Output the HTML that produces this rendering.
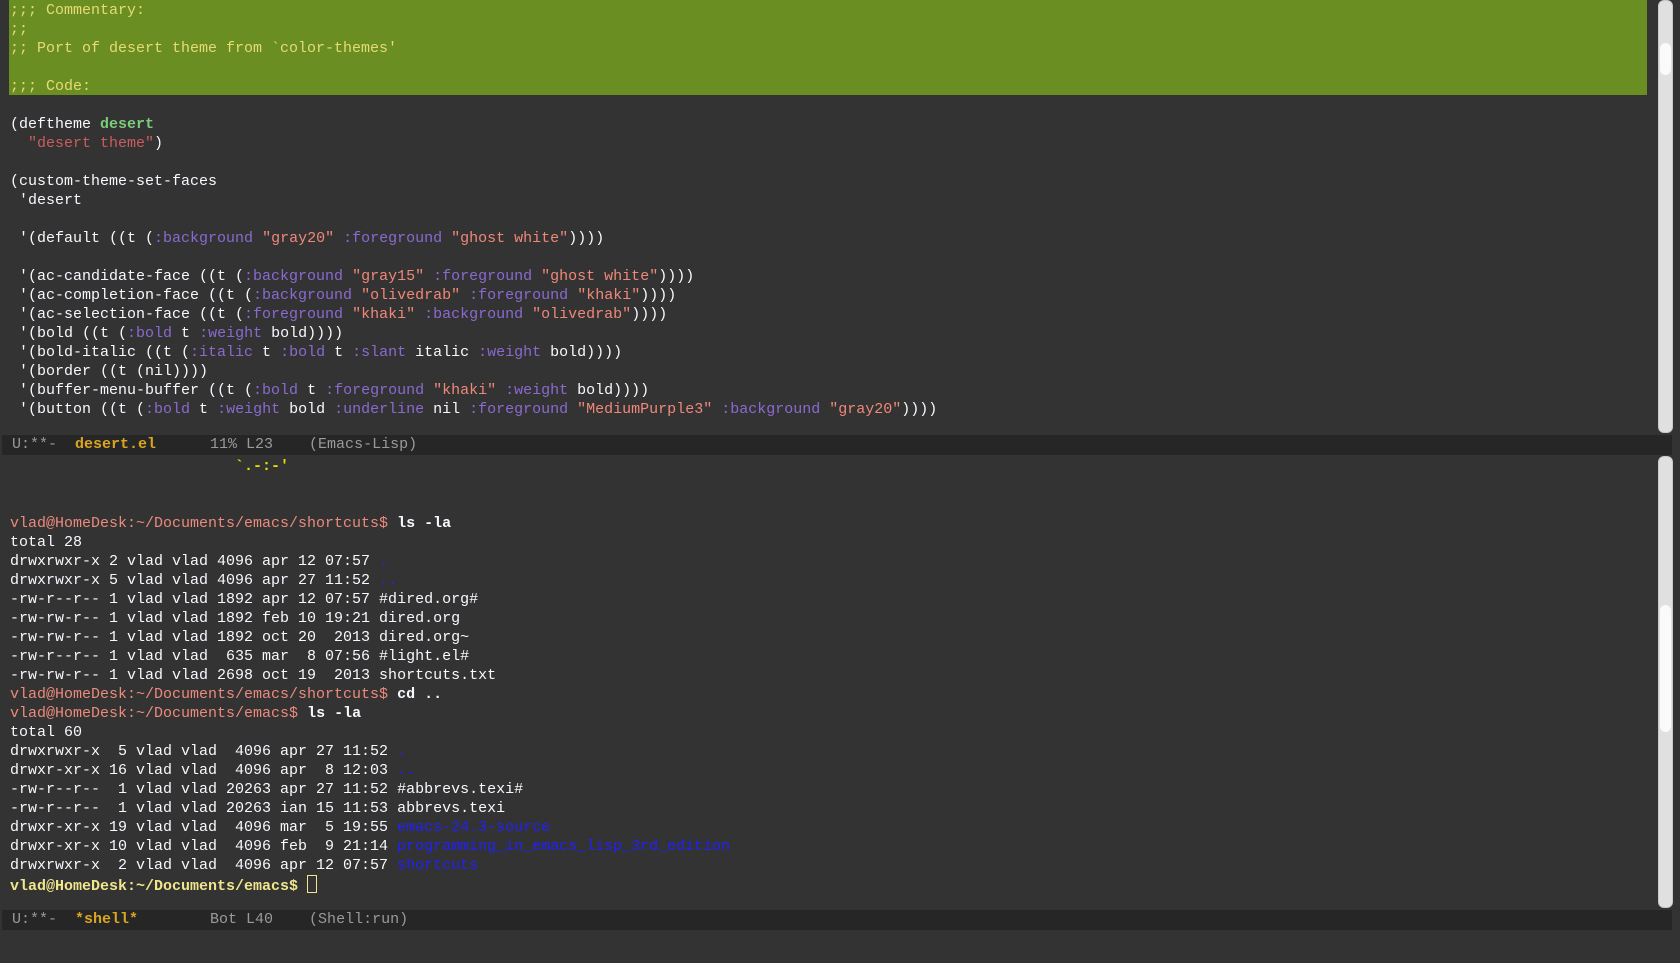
<!DOCTYPE html>
<html><head><meta charset="utf-8"><style>
html,body{margin:0;padding:0;width:1680px;height:963px;background:#333;overflow:hidden}
.w{position:absolute;left:10px;font:15px/19px "Liberation Mono","DejaVu Sans Mono",monospace;color:#f8f8ff;white-space:pre}
.g{position:absolute;left:9px;top:0;width:1638px;height:95px;background:#6b8e23}
.c{color:#e6db74}
.k{color:#8a6ad0}
.s{color:#f08878}
.s2{color:#cd5c5c}
.f{color:#7ccc7c;font-weight:bold}
.b{font-weight:bold}
.p{color:#ec8a7c}
.bl{color:#2020ff}
.ml{position:absolute;left:2px;width:1670px;height:20px;background:#262626;font:15px/20px "Liberation Mono","DejaVu Sans Mono",monospace;color:#9a9a9a;white-space:pre;padding-left:10px;box-sizing:border-box}
.bn{color:#daa520;font-weight:bold}
.sb{position:absolute;left:1658px;width:15px;background:#e0e0e0;border:1px solid #c8c8c8;box-sizing:border-box;border-radius:6px}
.th{position:absolute;left:1px;width:11px;background:#fafafa;border-radius:6px}
.cur{display:inline-block;width:8px;height:16px;border:1px solid #f0e68c;vertical-align:-3px}
</style></head><body>
<div class="g"></div>
<div class="w" style="top:1px"><span class="c">;;; Commentary:
;;
;; Port of desert theme from `color-themes'

;;; Code:</span>

(deftheme <span class="f">desert</span>
  <span class="s2">"desert theme"</span>)

(custom-theme-set-faces
 'desert

 '(default ((t (<span class="k">:background</span> <span class="s">"gray20"</span> <span class="k">:foreground</span> <span class="s">"ghost white"</span>))))

 '(ac-candidate-face ((t (<span class="k">:background</span> <span class="s">"gray15"</span> <span class="k">:foreground</span> <span class="s">"ghost white"</span>))))
 '(ac-completion-face ((t (<span class="k">:background</span> <span class="s">"olivedrab"</span> <span class="k">:foreground</span> <span class="s">"khaki"</span>))))
 '(ac-selection-face ((t (<span class="k">:foreground</span> <span class="s">"khaki"</span> <span class="k">:background</span> <span class="s">"olivedrab"</span>))))
 '(bold ((t (<span class="k">:bold</span> t <span class="k">:weight</span> bold))))
 '(bold-italic ((t (<span class="k">:italic</span> t <span class="k">:bold</span> t <span class="k">:slant</span> italic <span class="k">:weight</span> bold))))
 '(border ((t (nil))))
 '(buffer-menu-buffer ((t (<span class="k">:bold</span> t <span class="k">:foreground</span> <span class="s">"khaki"</span> <span class="k">:weight</span> bold))))
 '(button ((t (<span class="k">:bold</span> t <span class="k">:weight</span> bold <span class="k">:underline</span> nil <span class="k">:foreground</span> <span class="s">"MediumPurple3"</span> <span class="k">:background</span> <span class="s">"gray20"</span>))))</div>
<div class="ml" style="top:435px">U:**-  <span class="bn">desert.el</span>      11% L23    (Emacs-Lisp)</div>
<div class="w" style="top:457px"><span style="color:#e8e000;font-weight:bold">                         `.-:-'</span>


<span class="p">vlad@HomeDesk:~/Documents/emacs/shortcuts$</span> <span class="b">ls -la</span>
total 28
drwxrwxr-x 2 vlad vlad 4096 apr 12 07:57 <span class="bl">.</span>
drwxrwxr-x 5 vlad vlad 4096 apr 27 11:52 <span class="bl">..</span>
-rw-r--r-- 1 vlad vlad 1892 apr 12 07:57 #dired.org#
-rw-rw-r-- 1 vlad vlad 1892 feb 10 19:21 dired.org
-rw-rw-r-- 1 vlad vlad 1892 oct 20  2013 dired.org~
-rw-r--r-- 1 vlad vlad  635 mar  8 07:56 #light.el#
-rw-rw-r-- 1 vlad vlad 2698 oct 19  2013 shortcuts.txt
<span class="p">vlad@HomeDesk:~/Documents/emacs/shortcuts$</span> <span class="b">cd ..</span>
<span class="p">vlad@HomeDesk:~/Documents/emacs$</span> <span class="b">ls -la</span>
total 60
drwxrwxr-x  5 vlad vlad  4096 apr 27 11:52 <span class="bl">.</span>
drwxr-xr-x 16 vlad vlad  4096 apr  8 12:03 <span class="bl">..</span>
-rw-r--r--  1 vlad vlad 20263 apr 27 11:52 #abbrevs.texi#
-rw-r--r--  1 vlad vlad 20263 ian 15 11:53 abbrevs.texi
drwxr-xr-x 19 vlad vlad  4096 mar  5 19:55 <span class="bl">emacs-24.3-source</span>
drwxr-xr-x 10 vlad vlad  4096 feb  9 21:14 <span class="bl">programming_in_emacs_lisp_3rd_edition</span>
drwxrwxr-x  2 vlad vlad  4096 apr 12 07:57 <span class="bl">shortcuts</span>
<span style="color:#f0e68c;font-weight:bold">vlad@HomeDesk:~/Documents/emacs$</span> <span class="cur"></span></div>
<div class="ml" style="top:910px">U:**-  <span class="bn">*shell*</span>        Bot L40    (Shell:run)</div>
<div class="sb" style="top:0;height:433px"><div class="th" style="top:42px;height:32px"></div></div>
<div class="sb" style="top:456px;height:452px"><div class="th" style="top:148px;height:127px"></div></div>
</body></html>
